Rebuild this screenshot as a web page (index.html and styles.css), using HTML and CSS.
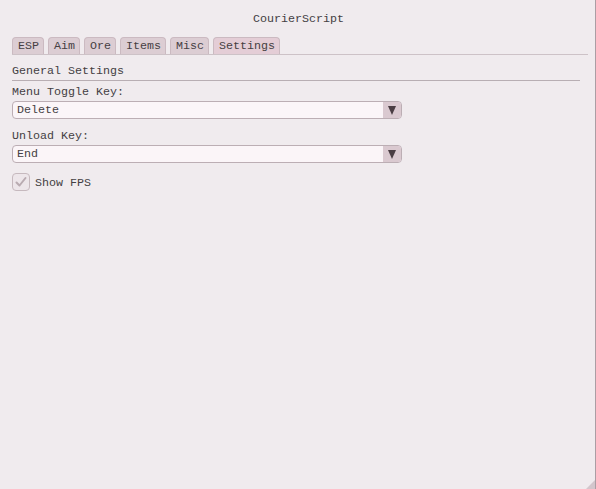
FILE: index.html
```html
<!DOCTYPE html>
<html>
<head>
<meta charset="utf-8">
<title>CourierScript</title>
<link rel="stylesheet" href="styles.css">
</head>
<body>
<div class="window">
  <div class="title">CourierScript</div>
  <div class="tabs">
    <div class="tab">ESP</div>
    <div class="tab">Aim</div>
    <div class="tab">Ore</div>
    <div class="tab">Items</div>
    <div class="tab">Misc</div>
    <div class="tab active">Settings</div>
  </div>
  <div class="section-title">General Settings</div>
  <div class="label">Menu Toggle Key:</div>
  <div class="select">
    <span class="select-value">Delete</span>
    <span class="select-button"><span class="arrow"></span></span>
  </div>
  <div class="label label-gap">Unload Key:</div>
  <div class="select">
    <span class="select-value">End</span>
    <span class="select-button"><span class="arrow"></span></span>
  </div>
  <label class="check">
    <span class="box">
      <svg width="14" height="14" viewBox="0 0 14 14"><path d="M2.5 7.5 L5.5 10.5 L11.5 3" fill="none" stroke="#b9abb1" stroke-width="2" stroke-linecap="round" stroke-linejoin="round"/></svg>
    </span>
    <span class="check-text">Show FPS</span>
  </label>
  <div class="grip"></div>
</div>
</body>
</html>
```
FILE: styles.css
```css
html, body {
  margin: 0;
  padding: 0;
  background: #f0ebee;
}

body {
  font-family: "Liberation Mono", "DejaVu Sans Mono", monospace;
  font-size: 11.67px;
  line-height: 14px;
  color: #444043;
}

.window {
  position: relative;
  box-sizing: border-box;
  width: 596px;
  height: 489px;
  padding: 12px 0 0 12px;
  border-right: 1px solid #ab9ea4;
  display: flex;
  flex-direction: column;
  align-items: flex-start;
}

.title {
  align-self: stretch;
  text-align: center;
  padding-right: 10px;
  height: 14px;
}

.tabs {
  align-self: stretch;
  margin-top: 11px;
  margin-right: 7px;
  display: flex;
  gap: 4px;
  border-bottom: 1px solid #cdc2c7;
}

.tab {
  height: 16px;
  line-height: 16px;
  padding: 0 4px 0 5px;
  border: 1px solid #cbbac1;
  border-bottom: none;
  border-radius: 4px 4px 0 0;
  background: #dccdd3;
  color: #464043;
}

.tab.active {
  background: #e4cdd6;
}

.section-title {
  align-self: stretch;
  margin-top: 9px;
  margin-right: 15px;
  padding-bottom: 2px;
  border-bottom: 1px solid #b8aeb3;
}

.label {
  margin-top: 3px;
  padding-top: 1px;
}

.label-gap {
  margin-top: 9px;
}

.select {
  margin-top: 2px;
  box-sizing: border-box;
  width: 390px;
  height: 18px;
  display: flex;
  border: 1px solid #bcaeb4;
  border-radius: 4px;
  background: #fbf5f8;
  overflow: hidden;
}

.select-value {
  flex: 1;
  padding: 1px 0 0 4px;
  line-height: 15px;
}

.select-button {
  width: 18px;
  background: #dac9d0;
  display: flex;
  align-items: center;
  justify-content: center;
}

.arrow {
  width: 0;
  height: 0;
  border-left: 4.5px solid transparent;
  border-right: 4.5px solid transparent;
  border-top: 9px solid #4a3d43;
  margin-top: 1px;
}

.check {
  margin-top: 10px;
  display: flex;
  align-items: center;
  gap: 5px;
}

.check-text {
  padding-top: 2px;
}

.box {
  box-sizing: border-box;
  width: 18px;
  height: 18px;
  border: 1px solid #c6b9be;
  border-radius: 4px;
  background: #ede6ea;
  display: flex;
  align-items: center;
  justify-content: center;
}

.grip {
  position: absolute;
  right: 0;
  bottom: 0;
  width: 0;
  height: 0;
  border-left: 9px solid transparent;
  border-bottom: 9px solid #d3c6cc;
}
```
